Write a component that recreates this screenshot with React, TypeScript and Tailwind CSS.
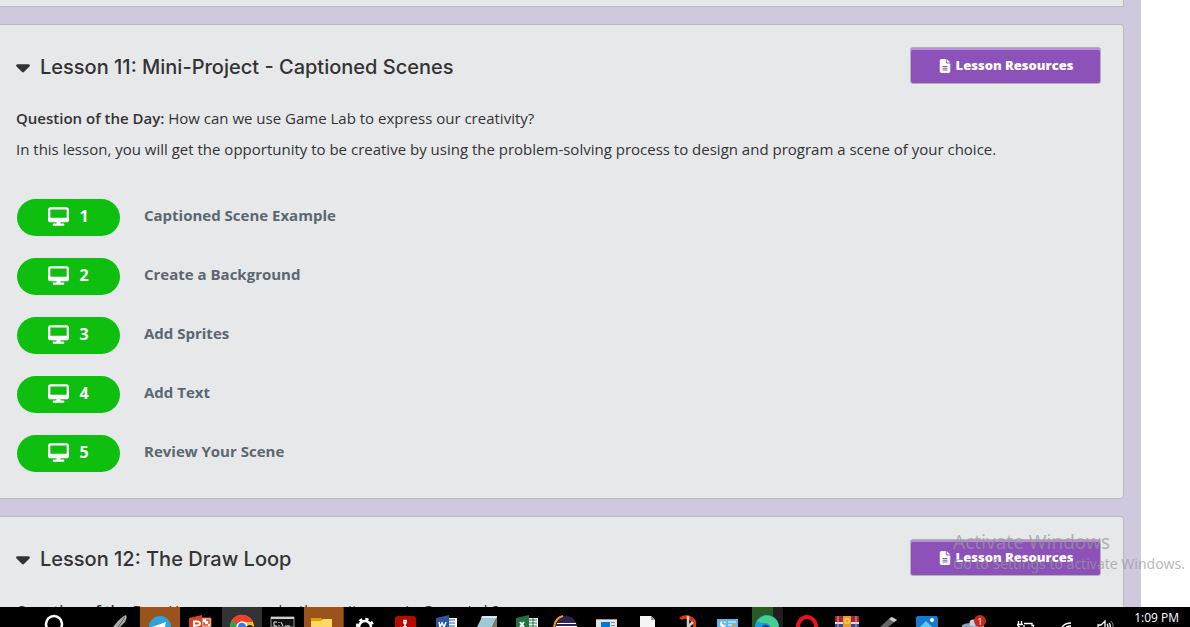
import React from "react";
import { FaCaretDown, FaDesktop, FaFileLines } from "react-icons/fa6";

type Lesson = {
  title: string;
  question: string;
  summary: string;
  levels: string[];
};

const lessons: Lesson[] = [
  {
    title: "Lesson 11: Mini-Project - Captioned Scenes",
    question: "How can we use Game Lab to express our creativity?",
    summary:
      "In this lesson, you will get the opportunity to be creative by using the problem-solving process to design and program a scene of your choice.",
    levels: ["Captioned Scene Example", "Create a Background", "Add Sprites", "Add Text", "Review Your Scene"],
  },
  {
    title: "Lesson 12: The Draw Loop",
    question: "How can we make the sprites run in Game Lab?",
    summary: "",
    levels: [],
  },
];

function LessonCard({ lesson }: { lesson: Lesson }) {
  return (
    <section className="shrink-0 rounded-r-sm border border-l-0 border-[#b9bbbe] bg-[#e7e8ea] pt-[22px] pr-[22px] pb-[26px] pl-4">
      <header className="flex items-center justify-between">
        <h2 className="flex items-center gap-2.5 pt-0.5 font-['Inter',sans-serif] text-xl font-medium">
          <FaCaretDown className="h-[22px] w-[14px]" />
          {lesson.title}
        </h2>
        <button
          type="button"
          className="flex h-[37px] w-[191px] items-center justify-center gap-1 rounded-[3px] border border-[#b5afba] bg-[#8c52ba] text-[13px] font-extrabold text-white shadow-[inset_0_2px_0_#b791d5]"
        >
          <FaFileLines className="size-[14px]" />
          Lesson Resources
        </button>
      </header>
      <div className="mt-[23px] flex flex-col gap-[9px] text-[15px] leading-[22px]">
        <p>
          <strong className="font-semibold">Question of the Day:</strong> {lesson.question}
        </p>
        {lesson.summary && <p>{lesson.summary}</p>}
      </div>
      {lesson.levels.length > 0 && (
        <ol className="mt-[39px] flex flex-col gap-[22px]">
          {lesson.levels.map((name, i) => (
            <li key={name}>
              <a href="#" className="flex items-center gap-6 pl-px text-[15px] font-bold text-[#5b6770]">
                <span className="flex h-[37px] w-[103px] items-center justify-center gap-2.5 rounded-full bg-[#0fbf10] pb-[3px] text-base font-bold text-white">
                  <FaDesktop className="size-[21px]" />
                  {i + 1}
                </span>
                <span className="pb-[5px]">{name}</span>
              </a>
            </li>
          ))}
        </ol>
      )}
    </section>
  );
}

type Tile = { label: string; tile: string; art: React.ReactNode };

const apps: Tile[] = [
  { label: "Search", tile: "mr-[27px] w-10", art: <circle cx="21" cy="17" r="8" fill="none" stroke="#fff" strokeWidth="2.5" /> },
  {
    label: "Pen",
    tile: "w-10",
    art: (
      <>
        <path d="M13 20 18 14Q23 9 26 8Q28 11 24 16L20 20Z" fill="#a9abad" />
        <path d="M18 20 25 10" stroke="#555" strokeWidth="1" />
      </>
    ),
  },
  {
    label: "Telegram",
    tile: "w-10 bg-[#9a531b]",
    art: (
      <>
        <circle cx="20" cy="20" r="11" fill="#2ea4dc" />
        <path d="M12 20 26 15 24 24 17 21Z" fill="#fff" />
      </>
    ),
  },
  {
    label: "PowerPoint",
    tile: "w-[42px]",
    art: (
      <>
        <path d="M9 11 22 8V20H9Z" fill="#d24726" />
        <path d="M22 11H31V20H22Z" fill="#fff" stroke="#d24726" />
        <path d="M26 13H29V17M24 15V18H28" fill="none" stroke="#d24726" strokeWidth="1.5" />
        <path d="M14 20V14.500H17Q20 14.500 20 16.500T17 18.500H14" fill="none" stroke="#fff" strokeWidth="2" />
      </>
    ),
  },
  {
    label: "Chrome",
    tile: "w-10 bg-[#333]",
    art: (
      <>
        <circle cx="20" cy="20" r="12" fill="#fbc116" />
        <path d="M8 20A12 12 0 0 1 10 13L16 20Z" fill="#2ba24c" />
        <path d="M10 13A12 12 0 0 1 31 15H20Q16 16 15 19Z" fill="#ea4335" />
        <circle cx="20" cy="20" r="5" fill="#3b78e7" stroke="#fff" strokeWidth="1.5" />
        <path d="M24 20Q27 16 32 20Z" fill="#222" />
      </>
    ),
  },
  {
    label: "Command Prompt",
    tile: "w-[42px]",
    art: (
      <>
        <path d="M9 10H32V20H9Z" fill="#111" stroke="#999" />
        <path d="M9 11H32" stroke="#ccc" strokeWidth="2" />
        <path d="M15 15H12V19H15M17 15V16M17 18V19M19 15L21 19M23 19H28" fill="none" stroke="#eee" />
      </>
    ),
  },
  {
    label: "File Explorer",
    tile: "w-10 border-r border-[#6f3a12] bg-[#9a531b]",
    art: (
      <>
        <path d="M7 11H17L19 13V20H7Z" fill="#dfa000" />
        <path d="M7 14H17L19 12H28V20H7Z" fill="#ffd766" />
      </>
    ),
  },
  {
    label: "Settings",
    tile: "w-10",
    art: (
      <>
        <circle cx="21" cy="20" r="6" fill="none" stroke="#fff" strokeWidth="2.5" />
        <circle cx="21" cy="20" r="8" fill="none" stroke="#fff" strokeWidth="2.500" strokeDasharray="3.2 3.1" />
      </>
    ),
  },
  {
    label: "Adobe Reader",
    tile: "w-10",
    art: (
      <>
        <rect x="11" y="9" width="21" height="20" rx="3" fill="#b30b00" />
        <path d="M21 20V16M20 13.500H22V16H20ZM19 20H23" fill="none" stroke="#fff" strokeWidth="1.500" />
      </>
    ),
  },
  {
    label: "Word",
    tile: "w-10",
    art: (
      <>
        <path d="M22 11H33V20H22Z" fill="#fff" />
        <path d="M25 13H31M25 16H31M25 19H31" stroke="#2b579a" />
        <path d="M12 11 25 8V20H12Z" fill="#2b579a" />
        <path d="M15 15 16 20 18 16 20 20 22 15" fill="none" stroke="#fff" strokeWidth="1.5" />
      </>
    ),
  },
  {
    label: "Notepad",
    tile: "w-10",
    art: (
      <>
        <path d="M18 10H33L28 20H13Z" fill="#9fc9d6" />
        <path d="M18 9H33V11H17Z" fill="#dbe6e8" />
        <path d="M28 20 33 10V20Z" fill="#817b6a" />
      </>
    ),
  },
  {
    label: "Excel",
    tile: "w-10",
    art: (
      <>
        <path d="M23 11H34V20H23Z" fill="#fff" />
        <path d="M25 13H33M25 16H33M25 19H33M29 11V20" stroke="#217346" />
        <path d="M12 11 25 8V20H12Z" fill="#217346" />
        <path d="M16 15 20 20M20 15 16 20" stroke="#fff" strokeWidth="2" />
      </>
    ),
  },
  {
    label: "Eclipse",
    tile: "w-[42px]",
    art: (
      <>
        <circle cx="22" cy="20" r="11" fill="#2c2255" />
        <path d="M10 20Q11 11 19 9" fill="none" stroke="#f7941e" strokeWidth="2" />
        <path d="M13 16.500H32M12 19.500H33" stroke="#fff" />
      </>
    ),
  },
  {
    label: "Window",
    tile: "w-[42px]",
    art: (
      <>
        <path d="M10 12H31V20H10Z" fill="#e4e4e4" />
        <path d="M10 12.5H31" stroke="#999" />
        <path d="M15 15H24V20H15Z" fill="#0078d7" />
        <path d="M25 15.500H29M25 18.500H29" stroke="#888" />
      </>
    ),
  },
  {
    label: "Document",
    tile: "w-[38px]",
    art: (
      <>
        <path d="M12 9H23L27 13V20H12Z" fill="#f5f5f5" />
        <path d="M23 9V13H27Z" fill="#999" />
      </>
    ),
  },
  {
    label: "Snipping Tool",
    tile: "w-10",
    art: (
      <>
        <path d="M13 11Q16 8 22 8Q32 11 30 20H27Q27 15 22 12Q18 11 16 13Z" fill="#d83b01" />
        <path d="M22 9V20M27 15 22 20" stroke="#ccc" strokeWidth="2.5" />
      </>
    ),
  },
  {
    label: "Control Panel",
    tile: "w-10",
    art: (
      <>
        <path d="M11 12H32V20H11Z" fill="#5cb8ef" />
        <circle cx="17" cy="17" r="3" fill="#fff" />
        <path d="M17 14V17H20" stroke="#2970b8" fill="none" />
        <path d="M22 15H30M22 18H26" stroke="#fff" />
        <path d="M27 18H30" stroke="#f7941e" strokeWidth="2" />
      </>
    ),
  },
  {
    label: "Edge",
    tile: "ml-1.5 w-[31px] border-r-10 border-[#1f1f1f] bg-[#285a24]",
    art: (
      <>
        <circle cx="15" cy="20" r="12" fill="#1b9de2" />
        <path d="M5 14Q12 5 22 11Q28 16 26 20H18Q17 15 10 16Z" fill="#46d089" />
        <path d="M10 20Q13 15 18 20Z" fill="#114a8b" />
      </>
    ),
  },
  { label: "Opera", tile: "w-10", art: <ellipse cx="24" cy="20" rx="9" ry="10" fill="none" stroke="#e5131f" strokeWidth="4" /> },
  {
    label: "WinRAR",
    tile: "w-10",
    art: (
      <>
        <path d="M12 9H36V15H12Z" fill="#a5204a" />
        <path d="M12 15H36V17H12Z" fill="#dfdfdf" />
        <path d="M12 17H36V20H12Z" fill="#3544a0" />
        <path d="M15 9V20M33 9V20" stroke="#e8b93c" />
        <path d="M20 9H28V20H20Z" fill="#e69c25" />
        <path d="M22 12H26V16H22Z" fill="none" stroke="#ffe181" />
      </>
    ),
  },
  {
    label: "USB Tool",
    tile: "w-10",
    art: (
      <>
        <path d="M17 20 28 10 34 13 25 20Z" fill="#666" />
        <path d="M26 12 29 10 34 13 31 15Z" fill="#ccc" />
      </>
    ),
  },
  {
    label: "Photos",
    tile: "w-10",
    art: (
      <>
        <rect x="13" y="9" width="22" height="22" rx="2" fill="#1979ca" />
        <circle cx="29" cy="13" r="2" fill="#fff" />
        <path d="M17 20 23 14 29 20Z" fill="#5cc8f4" />
      </>
    ),
  },
  {
    label: "Contacts, 1 notification",
    tile: "ml-2.5 w-10",
    art: (
      <>
        <path d="M9 20V18Q14 15 20 17L31 18V20Z" fill="#8ba0b5" />
        <circle cx="20" cy="16" r="3.500" fill="#c3d0dc" />
        <circle cx="27" cy="14" r="6" fill="#c42b1c" />
        <text x="27" y="17.500" textAnchor="middle" fontSize="9" fill="#fff">
          1
        </text>
      </>
    ),
  },
];

const tray: Tile[] = [
  {
    label: "Battery",
    tile: "w-10",
    art: <path d="M11 17.500H17M12.500 17V14M15.500 17V14M12 18Q12 20 14 20M18 16.500H26V18.500H27.500V20M18 20V18" fill="none" stroke="#fff" strokeWidth="1.3" />,
  },
  {
    label: "Network",
    tile: "w-10",
    art: <path d="M16 20Q19 16 25 16M20 20Q22 19 25 19" fill="none" stroke="#fff" strokeWidth="1.3" />,
  },
  {
    label: "Volume",
    tile: "w-10",
    art: (
      <>
        <path d="M12 20V18H15L19 14V20M21 17Q22 18 22 20M23 16Q25 18 24 20" fill="none" stroke="#fff" strokeWidth="1.3" />
        <path d="M25 14Q28 17 27 20" fill="none" stroke="#888" />
      </>
    ),
  },
];

function TileButton({ item }: { item: Tile }) {
  return (
    <button type="button" aria-label={item.label} className={`${item.tile} h-5 shrink-0`}>
      <svg viewBox="0 0 40 20" className="h-5 w-10">
        {item.art}
      </svg>
    </button>
  );
}

function Taskbar() {
  return (
    <footer className="flex h-5 shrink-0 items-start justify-between overflow-hidden bg-black pr-[11px] pl-[33px] text-white">
      <nav aria-label="Taskbar" className="flex">
        {apps.map((app) => (
          <TileButton key={app.label} item={app} />
        ))}
      </nav>
      <div className="flex shrink-0 items-start">
        {tray.map((item) => (
          <TileButton key={item.label} item={item} />
        ))}
        <time className="ml-2 text-xs leading-[22px] whitespace-nowrap">1:09 PM</time>
      </div>
    </footer>
  );
}

export default function App() {
  return (
    <div className="relative flex h-screen flex-col overflow-hidden bg-white font-['Open_Sans',sans-serif] text-[#333]">
      <main className="mr-[49px] flex min-h-0 flex-1 flex-col gap-[17px] overflow-hidden bg-[#cfc9de] pr-[17px]">
        <div className="h-[7px] shrink-0 border-r border-b border-[#b9bbbe] bg-[#e7e8ea]" />
        {lessons.map((lesson) => (
          <LessonCard key={lesson.title} lesson={lesson} />
        ))}
      </main>
      <Taskbar />
      <aside className="pointer-events-none absolute right-0 bottom-[53px] w-[237px] font-['Noto_Sans',sans-serif] whitespace-nowrap text-[#999]/70">
        <p className="text-[19px] leading-6">Activate Windows</p>
        <p className="text-sm leading-5">Go to Settings to activate Windows.</p>
      </aside>
    </div>
  );
}
